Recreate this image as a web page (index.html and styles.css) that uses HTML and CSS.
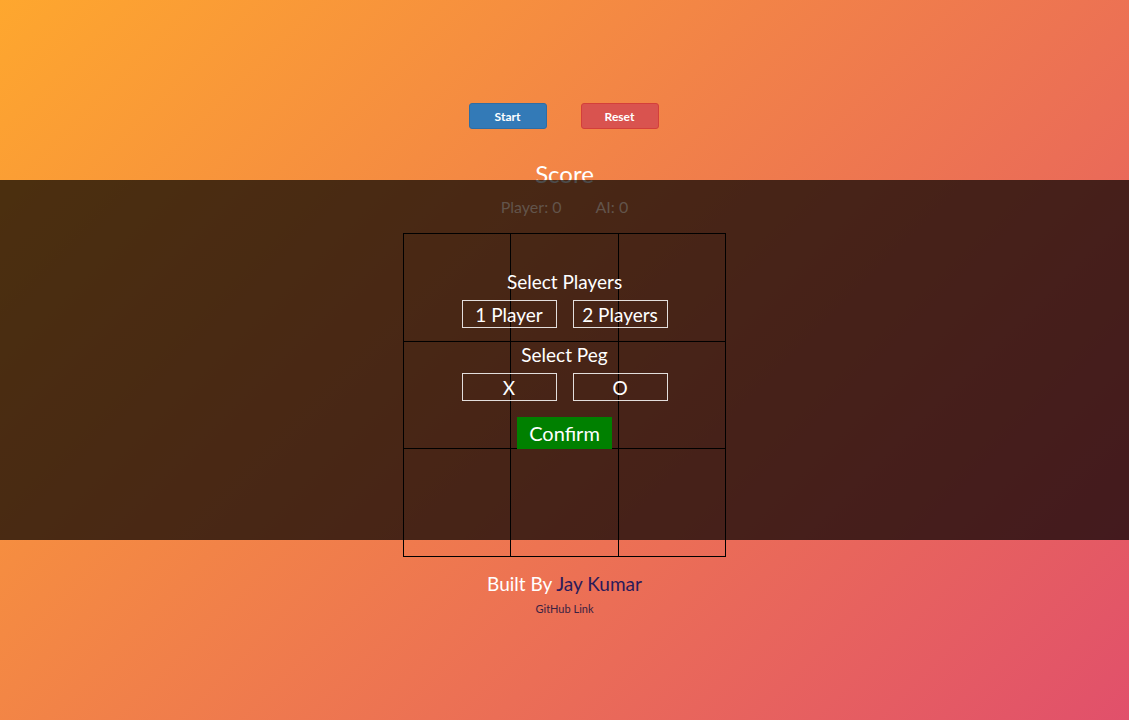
FILE: index.html
```html
<!DOCTYPE html>
<html lang="en">
<head>
<meta charset="utf-8">
<title>Tic Tac Toe</title>
<link rel="stylesheet" href="styles.css">
</head>
<body>
<div class="page">
  <div class="controls">
    <button class="btn btn-start">Start</button>
    <button class="btn btn-reset">Reset</button>
  </div>
  <h2 class="score-title">Score</h2>
  <div class="scores">
    <span>Player: 0</span>
    <span>AI: 0</span>
  </div>
  <div class="board">
    <div class="cell"></div><div class="cell"></div><div class="cell"></div>
    <div class="cell"></div><div class="cell"></div><div class="cell"></div>
    <div class="cell"></div><div class="cell"></div><div class="cell"></div>
  </div>
  <footer class="footer">
    <p class="built">Built By <a class="author" href="#">Jay Kumar</a></p>
    <a class="gh" href="#">GitHub Link</a>
  </footer>

  <div class="overlay">
    <div class="modal">
      <div class="modal-title">Select Players</div>
      <div class="choice-row">
        <button class="choice">1 Player</button>
        <button class="choice">2 Players</button>
      </div>
      <div class="modal-title second">Select Peg</div>
      <div class="choice-row">
        <button class="choice">X</button>
        <button class="choice">O</button>
      </div>
      <button class="confirm">Confirm</button>
    </div>
  </div>
</div>
</body>
</html>
```

FILE: styles.css
```css
html, body {
  margin: 0;
  padding: 0;
}
body {
  width: 1129px;
  height: 720px;
  overflow: hidden;
  font-family: Lato, "Open Sans", sans-serif;
  background: linear-gradient(135deg, #fea72e 0%, #e1506b 100%);
}
.page {
  position: relative;
  height: 720px;
  display: flex;
  flex-direction: column;
  align-items: center;
}
.controls {
  display: flex;
  gap: 34px;
  padding-top: 103px;
  margin-left: -2px;
}
.btn {
  width: 78px;
  height: 26px;
  border-radius: 3px;
  font-family: Lato, sans-serif;
  font-size: 12px;
  font-weight: 700;
  color: #fff;
  padding: 0;
  cursor: pointer;
}
.btn-start {
  background: #337ab7;
  border: 1px solid #2e6da4;
}
.btn-reset {
  background: #d9534f;
  border: 1px solid #d43f3a;
}
.score-title {
  margin: 30px 0 0;
  font-size: 24px;
  line-height: 29px;
  font-weight: 400;
  color: #fff;
}
.scores {
  position: relative;
  z-index: 2;
  display: flex;
  gap: 34px;
  margin-top: 9px;
  font-size: 16px;
  line-height: 19px;
  color: #62544b;
}
.board {
  margin-top: 17px;
  display: grid;
  grid-template-columns: repeat(3, 107.67px);
  grid-template-rows: repeat(3, 107.67px);
  border-left: 1px solid #000;
  border-top: 1px solid #000;
}
.cell {
  border-right: 1px solid #000;
  border-bottom: 1px solid #000;
}
.footer {
  margin-top: 15px;
  display: flex;
  flex-direction: column;
  align-items: center;
}
.built {
  margin: 0;
  font-size: 19px;
  line-height: 23px;
  color: #fff;
}
.author {
  color: #2a1a5a;
  text-decoration: none;
}
.gh {
  margin-top: 7px;
  font-size: 11px;
  line-height: 13px;
  color: #3a2142;
  text-decoration: none;
}
.overlay {
  position: absolute;
  left: 0;
  top: 180px;
  width: 1129px;
  height: 360px;
  background: rgba(0, 0, 0, 0.7);
  display: flex;
  align-items: center;
  justify-content: center;
  z-index: 1;
}
.modal {
  display: flex;
  flex-direction: column;
  align-items: center;
}
.modal-title {
  font-size: 19px;
  line-height: 22px;
  color: #fff;
}
.modal-title.second {
  margin-top: 16px;
}
.choice-row {
  display: flex;
  gap: 16px;
  margin-top: 7px;
}
.choice {
  width: 95px;
  height: 28px;
  padding: 0;
  background: transparent;
  border: 1px solid rgba(255, 255, 255, 0.85);
  color: #fff;
  font-family: Lato, sans-serif;
  font-size: 19px;
  cursor: pointer;
}
.confirm {
  margin-top: 16px;
  width: 95px;
  height: 32px;
  padding: 0;
  border: none;
  background: #008000;
  color: #fff;
  font-family: Lato, sans-serif;
  font-size: 20px;
  cursor: pointer;
}
```
